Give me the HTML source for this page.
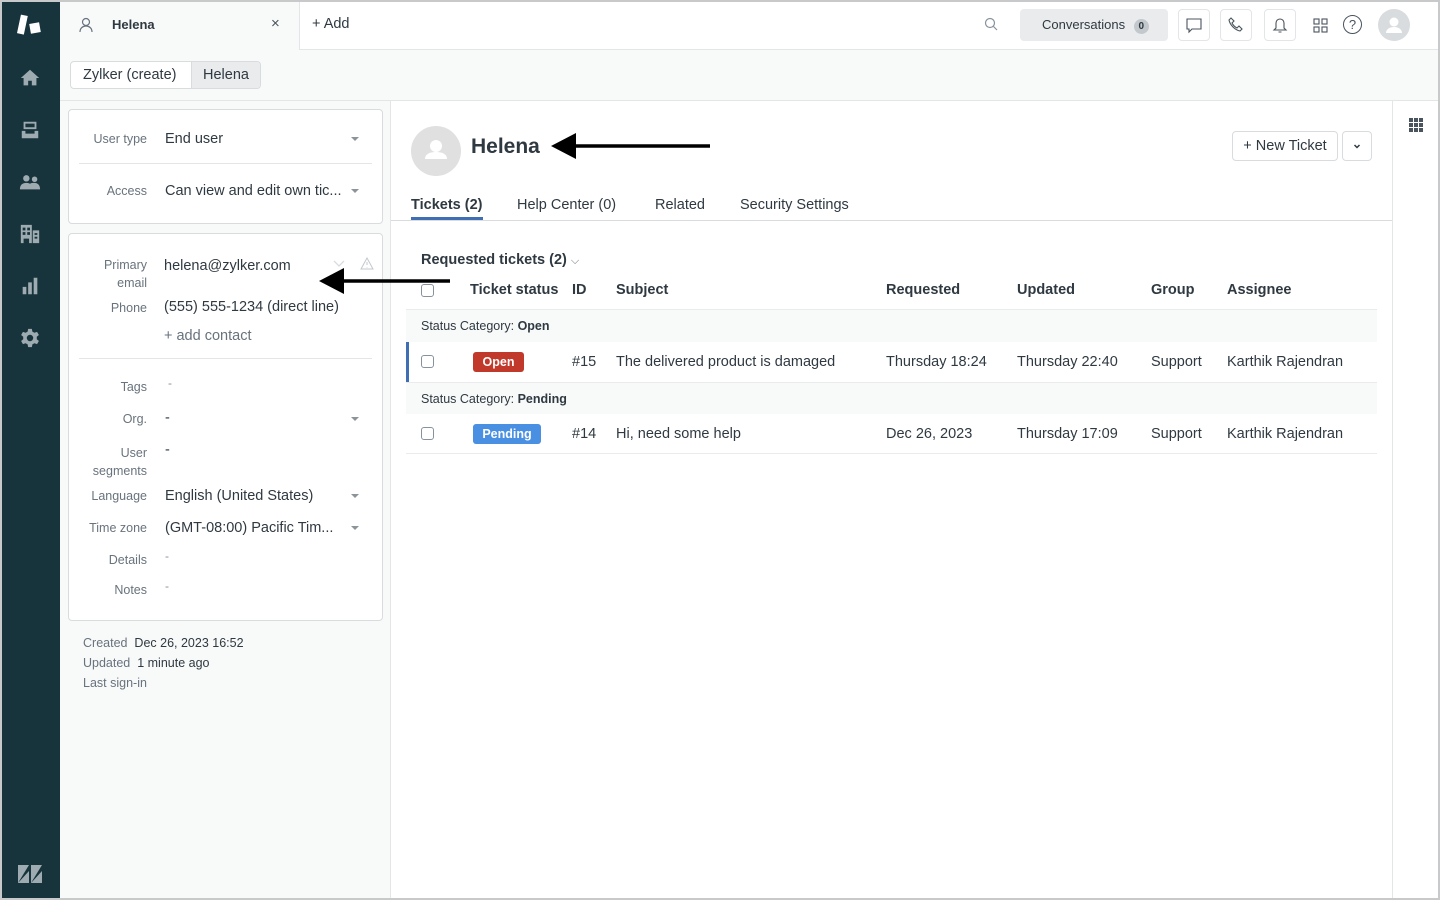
<!DOCTYPE html>
<html><head><meta charset="utf-8"><style>
*{box-sizing:border-box;margin:0;padding:0}
body{width:1440px;height:900px;overflow:hidden;font-family:"Liberation Sans",Arial,sans-serif;color:#2f3941;background:#fff;position:relative}
.a{position:absolute}
.frame{position:absolute;left:0;top:0;width:1440px;height:900px;border:2px solid #c8c9ca;pointer-events:none;z-index:50}
.side{left:0;top:0;width:60px;height:900px;background:#17333b}
.ico{position:absolute;left:19px;width:22px;height:22px;fill:#9eabb0}
.lbl{position:absolute;font-size:12.5px;color:#68737d;text-align:right;width:90px}
.val{position:absolute;font-size:14.5px;color:#2f3941}
.car{position:absolute;width:0;height:0;border-left:4px solid transparent;border-right:4px solid transparent;border-top:4px solid #8c9399}
.th{position:absolute;top:282px;font-size:14.5px;font-weight:bold;color:#2f3941}
.td{position:absolute;font-size:14.5px;color:#2f3941}
.cb{position:absolute;left:421px;width:13px;height:13px;border:1px solid #87929d;border-radius:3px;background:#fff}
.ibtn{position:absolute;top:9px;width:32px;height:32px;border:1px solid #e3e5e7;border-radius:4px;background:#fff}
.tab{position:absolute;top:197px;font-size:14.5px}
</style></head><body>
<div class="frame"></div>
<div class="a side"></div>
<svg class="a" style="left:17px;top:14px" width="26" height="22" viewBox="0 0 26 22"><rect x="2" y="1" width="7" height="19" fill="#fff" transform="rotate(12 5 10)"/><rect x="13" y="9" width="10" height="10" fill="#fff" transform="rotate(-10 18 14)"/></svg>
<svg class="ico" style="top:67px" viewBox="0 0 24 24"><path d="M12 3 2 12h3v8h5v-5h4v5h5v-8h3z"/></svg>
<svg class="ico" style="top:119px" viewBox="0 0 24 24"><path d="M5 3h14v8H5zM7 5v4h10V5zM3 13h4v3h10v-3h4v8H3z"/></svg>
<svg class="ico" style="top:171px" viewBox="0 0 24 24"><circle cx="8" cy="8" r="3.5"/><circle cx="17" cy="9" r="3"/><path d="M1 20c0-5 3-7 7-7s7 2 7 7zM14 20c0-3-1-5-2-6 1-1 3-1 5-1 3 0 6 2 6 7z"/></svg>
<svg class="ico" style="top:223px" viewBox="0 0 24 24"><path d="M2 2h12v20H2zM4 5v3h3V5zM9 5v3h3V5zM4 10v3h3v-3zM9 10v3h3v-3zM5 17v5h6v-5zM15 8h7v14h-7zM17 11v2h3v-2zM17 15v2h3v-2z"/></svg>
<svg class="ico" style="top:275px" viewBox="0 0 24 24"><path d="M4 13h4v8H4zM10 8h4v13h-4zM16 3h4v18h-4z"/></svg>
<svg class="ico" style="top:327px" viewBox="0 0 24 24"><path d="M10 2h4l.6 3 2.2 1.3 2.9-1 2 3.4-2.3 2v2.6l2.3 2-2 3.4-2.9-1L14.6 19 14 22h-4l-.6-3-2.2-1.3-2.9 1-2-3.4 2.3-2v-2.6l-2.3-2 2-3.4 2.9 1L9.4 5zM12 8.5a3.5 3.5 0 1 0 0 7 3.5 3.5 0 0 0 0-7z"/></svg>
<svg class="a" style="left:17px;top:863px" width="26" height="22" viewBox="0 0 26 22"><path d="M1 2h11L1 20zM14 2h11L14 20zM1 20h11V8zM14 20h11V8z" fill="#9eabb0"/></svg>

<div class="a" style="left:60px;top:0;width:1380px;height:50px;background:#fff;border-bottom:1px solid #e3e5e7"></div>
<div class="a" style="left:60px;top:0;width:240px;height:50px;background:#f8f9f9;border-right:1px solid #e3e5e7"></div>
<svg class="a" style="left:79px;top:17px" width="14" height="16" viewBox="0 0 14 16" fill="none" stroke="#68737d" stroke-width="1.2"><circle cx="7" cy="5" r="3.5"/><path d="M1 15c0-4 3-6 6-6s6 2 6 6"/></svg>
<div class="a" style="left:112px;top:17px;font-size:13px;font-weight:bold">Helena</div>
<div class="a" style="left:271px;top:15px;font-size:15px;color:#49545c">×</div>
<div class="a" style="left:312px;top:16px;font-size:14.5px">+ Add</div>
<svg class="a" style="left:984px;top:17px" width="14" height="14" viewBox="0 0 14 14" fill="none" stroke="#87929d" stroke-width="1.2"><circle cx="6" cy="6" r="4.5"/><path d="M9.5 9.5 13 13"/></svg>
<div class="a" style="left:1020px;top:9px;width:148px;height:32px;background:#e9ebed;border-radius:4px;font-size:13px;line-height:32px;padding-left:22px;color:#2f3941">Conversations <span style="display:inline-block;width:15px;height:15px;border-radius:8px;background:#c2c8cc;font-size:10px;line-height:15px;text-align:center;font-weight:bold;margin-left:5px">0</span></div>
<div class="ibtn" style="left:1178px"><svg width="30" height="30" viewBox="0 0 30 30" fill="none" stroke="#49545c" stroke-width="1.1"><path d="M8 9h14v10h-9l-3 3v-3H8z"/></svg></div>
<div class="ibtn" style="left:1220px"><svg width="30" height="30" viewBox="0 0 30 30" fill="none" stroke="#49545c" stroke-width="1.1"><path d="M10 8l3 3-2 2c1 2 3 4 5 5l2-2 3 3-2 2c-5-1-10-6-11-11z"/></svg></div>
<div class="ibtn" style="left:1264px"><svg width="30" height="30" viewBox="0 0 30 30" fill="none" stroke="#49545c" stroke-width="1.1"><path d="M9 20h12l-2-2v-5a4 4 0 0 0-8 0v5zM13.5 22h3"/></svg></div>
<svg class="a" style="left:1313px;top:18px" width="15" height="15" viewBox="0 0 15 15" fill="none" stroke="#49545c" stroke-width="1.1"><rect x="1" y="1" width="5" height="5"/><rect x="9" y="1" width="5" height="5"/><rect x="1" y="9" width="5" height="5"/><rect x="9" y="9" width="5" height="5"/></svg>
<div class="a" style="left:1343px;top:15px;width:19px;height:19px;border:1.3px solid #49545c;border-radius:50%;font-size:13px;text-align:center;line-height:17px;color:#49545c">?</div>
<div class="a" style="left:1378px;top:9px;width:32px;height:32px;border-radius:50%;background:#d8dcde"><svg width="32" height="32" viewBox="0 0 32 32" fill="#fff"><circle cx="16" cy="13" r="4.5"/><path d="M8 24c0-4 4-6 8-6s8 2 8 6z"/></svg></div>

<div class="a" style="left:60px;top:50px;width:1380px;height:51px;background:#f8f9f9;border-bottom:1px solid #e3e5e7"></div>
<div class="a" style="left:70px;top:61px;width:191px;height:28px;border:1px solid #d8dcde;border-radius:4px;background:#fff;overflow:hidden;font-size:14.5px;line-height:26px">
<span style="position:absolute;left:12px">Zylker (create)</span>
<span style="position:absolute;left:120px;top:0;width:71px;height:26px;background:#e9ebed;border-left:1px solid #d8dcde;padding-left:11px">Helena</span></div>

<div class="a" style="left:60px;top:101px;width:331px;height:799px;background:#f8f9f9;border-right:1px solid #e3e5e7"></div>
<div class="a" style="left:68px;top:109px;width:315px;height:115px;background:#fff;border:1px solid #d8dcde;border-radius:4px"></div>
<div class="a" style="left:79px;top:163px;width:293px;height:1px;background:#e3e5e7"></div>
<div class="lbl" style="left:57px;top:132px">User type</div><div class="val" style="left:165px;top:131px">End user</div><div class="car" style="left:351px;top:137px"></div>
<div class="lbl" style="left:57px;top:184px">Access</div><div class="val" style="left:165px;top:183px">Can view and edit own tic...</div><div class="car" style="left:351px;top:189px"></div>

<div class="a" style="left:68px;top:233px;width:315px;height:388px;background:#fff;border:1px solid #d8dcde;border-radius:4px"></div>
<div class="lbl" style="left:57px;top:256px;line-height:18px">Primary<br>email</div><div class="val" style="left:164px;top:258px">helena@zylker.com</div>
<svg class="a" style="left:333px;top:260px" width="12" height="8" viewBox="0 0 12 8" fill="none" stroke="#d8dcde" stroke-width="1.3"><path d="M1 1l5 5 5-5"/></svg>
<svg class="a" style="left:360px;top:257px" width="14" height="13" viewBox="0 0 14 13" fill="none" stroke="#c2c8cc" stroke-width="1"><path d="M7 1 13 12H1zM7 5v3M7 10v.5"/></svg>
<div class="lbl" style="left:57px;top:301px">Phone</div><div class="val" style="left:164px;top:299px">(555) 555-1234 (direct line)</div>
<div class="val" style="left:164px;top:328px;color:#68737d">+ add contact</div>
<div class="a" style="left:79px;top:358px;width:293px;height:1px;background:#e3e5e7"></div>
<div class="lbl" style="left:57px;top:380px">Tags</div><div class="val" style="left:168px;top:376px;color:#87929d;font-size:12px">-</div>
<div class="lbl" style="left:57px;top:412px">Org.</div><div class="val" style="left:165px;top:410px">-</div><div class="car" style="left:351px;top:417px"></div>
<div class="lbl" style="left:57px;top:444px;line-height:18px">User<br>segments</div><div class="val" style="left:165px;top:442px">-</div>
<div class="lbl" style="left:57px;top:489px">Language</div><div class="val" style="left:165px;top:488px">English (United States)</div><div class="car" style="left:351px;top:494px"></div>
<div class="lbl" style="left:57px;top:521px">Time zone</div><div class="val" style="left:165px;top:520px">(GMT-08:00) Pacific Tim...</div><div class="car" style="left:351px;top:526px"></div>
<div class="lbl" style="left:57px;top:553px">Details</div><div class="val" style="left:165px;top:549px;color:#87929d;font-size:12px">-</div>
<div class="lbl" style="left:57px;top:583px">Notes</div><div class="val" style="left:165px;top:579px;color:#87929d;font-size:12px">-</div>
<div class="a" style="left:83px;top:633px;font-size:12.5px;line-height:20px;color:#68737d">Created&nbsp; <span style="color:#2f3941">Dec 26, 2023 16:52</span><br>Updated&nbsp; <span style="color:#2f3941">1 minute ago</span><br>Last sign-in</div>

<div class="a" style="left:1392px;top:101px;width:1px;height:799px;background:#e3e5e7"></div>
<svg class="a" style="left:1409px;top:118px" width="14" height="14" viewBox="0 0 14 14" fill="#49545c"><rect x="0" y="0" width="4" height="4"/><rect x="5" y="0" width="4" height="4"/><rect x="10" y="0" width="4" height="4"/><rect x="0" y="5" width="4" height="4"/><rect x="5" y="5" width="4" height="4"/><rect x="10" y="5" width="4" height="4"/><rect x="0" y="10" width="4" height="4"/><rect x="5" y="10" width="4" height="4"/><rect x="10" y="10" width="4" height="4"/></svg>

<div class="a" style="left:411px;top:126px;width:50px;height:50px;border-radius:50%;background:#e0e0e0"><svg width="50" height="50" viewBox="0 0 50 50" fill="#fff"><circle cx="25" cy="20" r="6"/><path d="M14 33c0-5 5-7 11-7s11 2 11 7z"/></svg></div>
<div class="a" style="left:471px;top:135px;font-size:21px;font-weight:bold;color:#2f3941">Helena</div>
<div class="a" style="left:1232px;top:131px;width:106px;height:30px;border:1px solid #d8dcde;border-radius:4px;font-size:14.5px;line-height:28px;text-align:center">+ New Ticket</div>
<div class="a" style="left:1342px;top:131px;width:30px;height:30px;border:1px solid #d8dcde;border-radius:4px"><svg width="28" height="28" viewBox="0 0 28 28" fill="none" stroke="#2f3941" stroke-width="1.5"><path d="M11.5 13l2.5 2.5 2.5-2.5"/></svg></div>

<div class="a" style="left:391px;top:220px;width:1001px;height:1px;background:#d8dcde"></div>
<div class="tab" style="left:411px;font-weight:bold">Tickets (2)</div>
<div class="a" style="left:411px;top:217px;width:72px;height:3px;background:#3f6eb3"></div>
<div class="tab" style="left:517px">Help Center (0)</div>
<div class="tab" style="left:655px">Related</div>
<div class="tab" style="left:740px">Security Settings</div>

<div class="a" style="left:421px;top:252px;font-size:14.5px;font-weight:bold">Requested tickets (2) <span style="font-weight:normal;font-size:11px;color:#68737d">⌵</span></div>
<div class="cb" style="top:284px"></div>
<div class="th" style="left:470px">Ticket status</div>
<div class="th" style="left:572px">ID</div>
<div class="th" style="left:616px">Subject</div>
<div class="th" style="left:886px">Requested</div>
<div class="th" style="left:1017px">Updated</div>
<div class="th" style="left:1151px">Group</div>
<div class="th" style="left:1227px">Assignee</div>
<div class="a" style="left:406px;top:309px;width:971px;height:33px;background:#f8f9f9;border-top:1px solid #e9ebed;font-size:12.5px;line-height:33px;padding-left:15px">Status Category: <b>Open</b></div>
<div class="a" style="left:406px;top:342px;width:3px;height:40px;background:#3f6eb3"></div>
<div class="cb" style="top:355px"></div>
<div class="a" style="left:473px;top:352px;width:51px;height:20px;background:#c0392b;border-radius:3px;color:#fff;font-size:12.5px;font-weight:bold;text-align:center;line-height:20px">Open</div>
<div class="td" style="left:572px;top:354px">#15</div>
<div class="td" style="left:616px;top:354px">The delivered product is damaged</div>
<div class="td" style="left:886px;top:354px">Thursday 18:24</div>
<div class="td" style="left:1017px;top:354px">Thursday 22:40</div>
<div class="td" style="left:1151px;top:354px">Support</div>
<div class="td" style="left:1227px;top:354px">Karthik Rajendran</div>
<div class="a" style="left:406px;top:382px;width:971px;height:32px;background:#f8f9f9;border-top:1px solid #e9ebed;font-size:12.5px;line-height:32px;padding-left:15px">Status Category: <b>Pending</b></div>
<div class="cb" style="top:427px"></div>
<div class="a" style="left:473px;top:424px;width:68px;height:20px;background:#4a90e2;border-radius:3px;color:#fff;font-size:12.5px;font-weight:bold;text-align:center;line-height:20px">Pending</div>
<div class="td" style="left:572px;top:426px">#14</div>
<div class="td" style="left:616px;top:426px">Hi, need some help</div>
<div class="td" style="left:886px;top:426px">Dec 26, 2023</div>
<div class="td" style="left:1017px;top:426px">Thursday 17:09</div>
<div class="td" style="left:1151px;top:426px">Support</div>
<div class="td" style="left:1227px;top:426px">Karthik Rajendran</div>
<div class="a" style="left:406px;top:453px;width:971px;height:1px;background:#e9ebed"></div>

<svg class="a" style="left:0;top:0;z-index:20" width="1440" height="900"><path d="M575 146H710" stroke="#000" stroke-width="3.5"/><path d="M551 146 576 133V159z"/><path d="M342 281H450" stroke="#000" stroke-width="3.5"/><path d="M319 281 344 268V294z"/></svg>
</body></html>
